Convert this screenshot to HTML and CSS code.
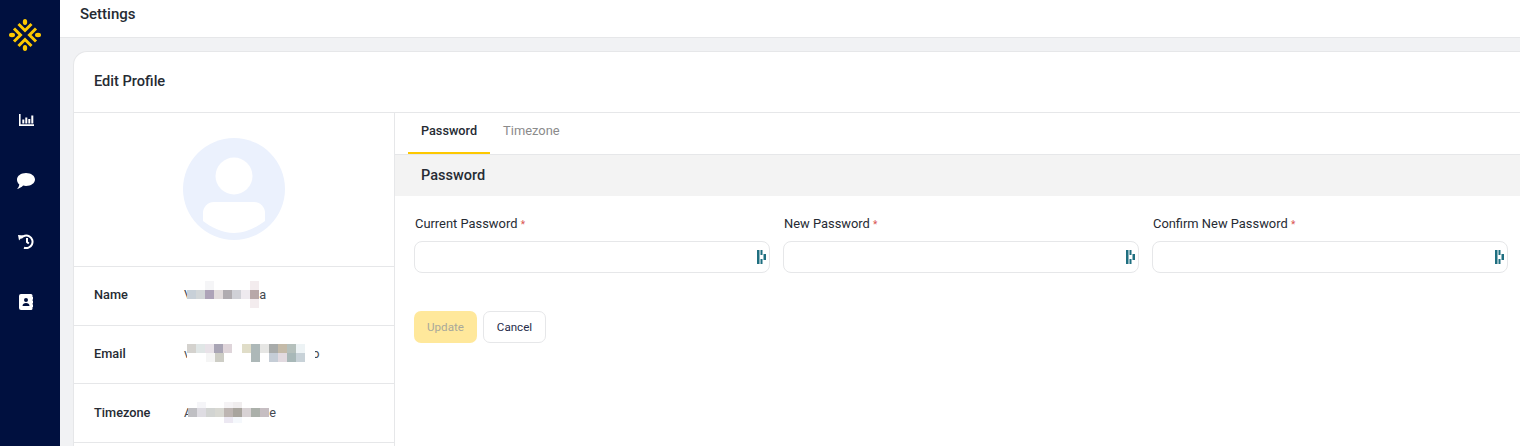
FILE: index.html
```html
<!DOCTYPE html>
<html lang="en">
<head>
<meta charset="utf-8">
<title>Settings</title>
<link rel="stylesheet" href="styles.css">
</head>
<body>
<div class="app">
  <aside class="sidebar">
    <svg class="logo" width="32" height="32" viewBox="0 0 32 32" fill="none" stroke="#fdc800" stroke-width="3">
      <g fill="#fdc800" stroke="none">
        <ellipse cx="16" cy="3" rx="2.200" ry="3"/><ellipse cx="16" cy="29" rx="2.200" ry="3"/>
        <ellipse cx="3" cy="16" rx="3" ry="2.200"/><ellipse cx="29" cy="16" rx="3" ry="2.200"/>
      </g>
      <path d="M9.500 5 16 11.500 22.500 5M9.500 27 16 20.500 22.500 27M5 9.500 11.500 16 5 22.500M27 9.500 20.500 16 27 22.500"/>
    </svg>
    <nav class="nav">
      <div class="nav-item"><svg width="15" height="12" viewBox="0 0 15 12" fill="#fff"><path d="M0 0h1.600v10.300H15V12H0z"/><path d="M3.300 5.500h2v4h-2zM6.300 3.500h2v6h-2zM9.300 5h2v4.500h-2zM12.300 1.500h2v8h-2z"/></svg></div>
      <div class="nav-item"><svg width="18" height="16" viewBox="0 0 18 16" fill="#fff"><path d="M9 0c5 0 9 2.900 9 6.500S14 13 9 13c-1 0-2-.1-2.900-.4C4.700 14.200 2.500 15.500 0 16c1.300-1.300 2.100-2.800 2.300-4.500C.8 10.300 0 8.500 0 6.500 0 2.900 4 0 9 0z"/></svg></div>
      <div class="nav-item"><svg width="16" height="15" viewBox="0 0 16 15" fill="none" stroke="#fff" stroke-width="2"><path d="M3 4.300A6.300 6.300 0 1 1 6 13.700"/><path d="M9 4v4l1.800 1.500"/><path d="M0 1 5.500 1.500 1 6.500z" fill="#fff" stroke="none"/></svg></div>
      <div class="nav-item"><svg width="14" height="16" viewBox="0 0 14 16"><path fill="#fff" fill-rule="evenodd" d="M2 0h10a1.500 1.500 0 0 1 1.500 1.500V3H14v2.500h-.5v1.200h.5v2.600h-.5v1.200h.5V13h-.5v1.500A1.500 1.500 0 0 1 12 16H2a2 2 0 0 1-2-2V2a2 2 0 0 1 2-2zm5 4a2 2 0 1 0 0 4 2 2 0 0 0 0-4zM3.500 12h7c0-1.800-1.500-3-3.500-3s-3.500 1.200-3.500 3z"/></svg></div>
    </nav>
  </aside>
  <div class="main">
    <header class="topbar">Settings</header>
    <div class="content">
      <section class="card">
        <h1 class="card-head">Edit Profile</h1>
        <div class="card-body">
          <div class="profile">
            <div class="avatar-box">
              <svg width="102" height="102" viewBox="0 0 102 102">
                <circle cx="51" cy="51" r="51" fill="#ebf1fd"/>
                <circle cx="51" cy="38" r="18.500" fill="#fff"/>
                <path d="M20 78V75a11 11 0 0 1 11-11H71a11 11 0 0 1 11 11V83C74 89 63 95 51 95S28 89 20 83z" fill="#fff"/>
              </svg>
            </div>
            <div class="row">
              <span class="row-label">Name</span>
              <span class="row-value">V<svg class="mosaic mosaic-name" width="72" height="27" viewBox="0 0 72 27"><rect x="18" width="9" height="9" fill="#f5f5f7"/><rect x="63" width="9" height="9" fill="#f3ecee"/><rect y="9" width="9" height="9" fill="#c8d0d8"/><rect x="9" y="9" width="9" height="9" fill="#d2d6d8"/><rect x="18" y="9" width="9" height="9" fill="#ada3b8"/><rect x="27" y="9" width="9" height="9" fill="#e2dcdc"/><rect x="36" y="9" width="9" height="9" fill="#b0acb0"/><rect x="45" y="9" width="9" height="9" fill="#d0d1d7"/><rect x="54" y="9" width="9" height="9" fill="#eeeaef"/><rect x="63" y="9" width="9" height="9" fill="#b8a8a8"/><rect x="63" y="18" width="9" height="9" fill="#f3ecee"/></svg>a</span>
            </div>
            <div class="row">
              <span class="row-label">Email</span>
              <span class="row-value">v<svg class="mosaic mosaic-email" width="128" height="18" viewBox="0 0 128 18"><rect width="9" height="9" fill="#d4d2ce"/><rect x="9" width="9" height="9" fill="#e0e6e6"/><rect x="18" width="9" height="9" fill="#e8e2e8"/><rect x="27" width="9" height="9" fill="#a9a5b5"/><rect x="36" width="9" height="9" fill="#dfd5da"/><rect x="55" width="9" height="9" fill="#e0ddc8"/><rect x="64" width="9" height="18" fill="#adb8b8"/><rect x="73" width="9" height="9" fill="#e6e6e4"/><rect x="82" width="9" height="9" fill="#a8abaa"/><rect x="91" width="9" height="9" fill="#c4baa8"/><rect x="100" width="9" height="9" fill="#b5c0bc"/><rect x="109" width="9" height="9" fill="#edf3f5"/><rect x="19" y="9" width="9" height="9" fill="#f5f5f5"/><rect x="28" y="9" width="9" height="9" fill="#cdcdc5"/><rect x="82" y="9" width="9" height="9" fill="#c5cdd6"/><rect x="91" y="9" width="9" height="9" fill="#e2dae0"/><rect x="100" y="9" width="9" height="9" fill="#a8b8b8"/><rect x="109" y="9" width="9" height="9" fill="#c8d2d8"/></svg><span class="tail">o</span></span>
            </div>
            <div class="row">
              <span class="row-label">Timezone</span>
              <span class="row-value">A<svg class="mosaic mosaic-tz" width="81" height="21" viewBox="0 0 81 21"><rect x="9" width="9" height="6" fill="#f5f5f8"/><rect x="36" width="9" height="6" fill="#f5f3f5"/><rect x="45" width="9" height="6" fill="#f0edee"/><rect y="6" width="9" height="9" fill="#bfbfc3"/><rect x="9" y="6" width="9" height="9" fill="#dedce2"/><rect x="18" y="6" width="9" height="9" fill="#d2d4d2"/><rect x="27" y="6" width="9" height="9" fill="#d8d8d2"/><rect x="36" y="6" width="9" height="9" fill="#bdb5b2"/><rect x="45" y="6" width="9" height="9" fill="#a9a59e"/><rect x="54" y="6" width="9" height="9" fill="#d8d2d4"/><rect x="63" y="6" width="9" height="9" fill="#abb0aa"/><rect x="72" y="6" width="9" height="9" fill="#c6bec2"/><rect x="36" y="15" width="9" height="6" fill="#ece8f2"/><rect x="45" y="15" width="9" height="6" fill="#f5f8fc"/></svg>e</span>
            </div>
            <div class="row row-end"></div>
          </div>
          <div class="panel">
            <div class="tabs">
              <span class="tab tab-active">Password</span>
              <span class="tab">Timezone</span>
            </div>
            <h2 class="section-bar">Password</h2>
            <form class="form">
              <div class="fields">
                <div class="field">
                  <label class="field-label">Current Password <span class="req">*</span></label>
                  <div class="input">
                    <svg width="9" height="14" viewBox="0 0 9 14" fill="#1f6f80"><path d="M0 0h2.500v14H0zM3.500 0h2v5h-2zM3.500 9h2v5h-2zM6.500 4H9v6H6.500z"/></svg>
                  </div>
                </div>
                <div class="field">
                  <label class="field-label">New Password <span class="req">*</span></label>
                  <div class="input">
                    <svg width="9" height="14" viewBox="0 0 9 14" fill="#1f6f80"><path d="M0 0h2.500v14H0zM3.500 0h2v5h-2zM3.500 9h2v5h-2zM6.500 4H9v6H6.500z"/></svg>
                  </div>
                </div>
                <div class="field">
                  <label class="field-label">Confirm New Password <span class="req">*</span></label>
                  <div class="input">
                    <svg width="9" height="14" viewBox="0 0 9 14" fill="#1f6f80"><path d="M0 0h2.500v14H0zM3.500 0h2v5h-2zM3.500 9h2v5h-2zM6.500 4H9v6H6.500z"/></svg>
                  </div>
                </div>
              </div>
              <div class="actions">
                <button type="button" class="btn btn-update">Update</button>
                <button type="button" class="btn btn-cancel">Cancel</button>
              </div>
            </form>
          </div>
        </div>
      </section>
    </div>
  </div>
</div>
</body>
</html>
```
FILE: styles.css
```css
* { box-sizing: border-box; }
html, body { margin: 0; height: 100%; overflow: hidden; }
body { font-family: Roboto, "Liberation Sans", sans-serif; color: #262b33; background: #fff; }
.app { display: flex; height: 446px; overflow: hidden; }
.sidebar { width: 60px; flex: none; background: #00103f; display: flex; flex-direction: column; align-items: center; padding-top: 19px; }
.logo { display: block; margin-left: -10px; flex: none; }
.nav { margin-top: 39px; width: 100%; }
.nav-item { height: 60.5px; display: flex; align-items: center; justify-content: center; padding-right: 8px; }
.nav-item svg { display: block; }
.main { flex: 1; min-width: 0; display: flex; flex-direction: column; background: #f1f2f4; }
.topbar { height: 38px; background: #fff; border-bottom: 1px solid #e6e7e9; padding: 6px 0 0 20px; font-size: 15px; font-weight: 500; line-height: 16px; flex: none; }
.content { flex: 1; padding: 13px 0 0 13px; min-height: 0; }
.card { height: 100%; background: #fff; border: 1px solid #e6e7e9; border-right: 0; border-bottom: 0; border-top-left-radius: 14px; display: flex; flex-direction: column; }
.card-head { margin: 0; height: 61px; flex: none; border-bottom: 1px solid #e6e7e9; padding: 0 20px; font-size: 14.600px; font-weight: 500; line-height: 58px; }
.card-body { flex: 1; display: flex; min-height: 0; }
.profile { width: 321px; flex: none; border-right: 1px solid #e6e7e9; }
.avatar-box { height: 153px; display: flex; justify-content: center; padding-top: 25px; }
.row { display: flex; align-items: center; height: 58.670px; border-top: 1px solid #e6e7e9; padding: 0 0 2px 20px; font-size: 12.750px; }
.row-end { height: 4px; padding: 0; }
.row-label { width: 90px; font-weight: 500; flex: none; }
.row-value { display: flex; align-items: center; color: #444950; }
.mosaic { display: block; flex: none; position: relative; background: #fff; }
.mosaic-name { margin-left: -5px; background: transparent; }
.mosaic-email { margin-left: -3px; }
.mosaic-tz { margin-left: -4px; }
.tail { margin-left: -3px; }
.panel { flex: 1; min-width: 0; display: flex; flex-direction: column; }
.tabs { display: flex; height: 42px; flex: none; border-bottom: 1px solid #e6e7e9; padding-left: 13px; }
.tab { height: 41px; padding: 0 13px; font-size: 12.900px; line-height: 36px; color: #8b8b8b; }
.tab-active { color: #262b33; font-weight: 500; font-size: 12.700px; border-bottom: 2px solid #fdc800; }
.section-bar { margin: 0; height: 41px; flex: none; background: #f3f3f3; padding-left: 26px; font-size: 14.500px; font-weight: 500; line-height: 41px; }
.form { padding: 19px 12px 0 19px; }
.fields { display: flex; gap: 13px; }
.field { flex: 1; min-width: 0; }
.field-label { display: block; height: 26px; font-size: 12.900px; line-height: 18px; padding-left: 1px; }
.req { color: #d9534f; font-size: 10px; }
.input { height: 32px; border: 1px solid #e6e7e9; border-radius: 8px; display: flex; align-items: center; justify-content: flex-end; padding-right: 3px; }
.input svg { display: block; }
.actions { display: flex; gap: 6px; margin-top: 38px; }
.btn { height: 32px; width: 63px; border-radius: 7px; font: 400 11.600px Roboto, "Liberation Sans", sans-serif; padding: 0 0 1px; }
.btn-update { background: #ffe89b; border: 0; color: #a9a89a; }
.btn-cancel { background: #fff; border: 1px solid #e6e7e9; color: #262b4a; }
```
